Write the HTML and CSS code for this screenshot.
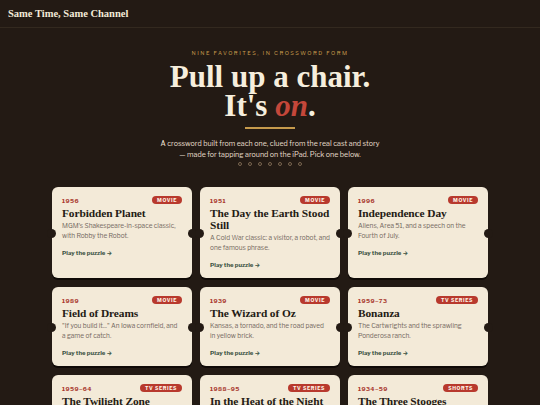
FILE: index.html
```html
<!DOCTYPE html>
<html>
    <head>
        <title>Same Time, Same Channel</title>
        <meta charset="UTF-8">
        <meta name="viewport" content="width=device-width, initial-scale=1.0">
        <link rel="stylesheet" href="styles.css">
    </head>
    <body>
        <header class="topbar">
            <span class="brand">Same Time, Same Channel</span>
        </header>

        <section class="hero">
            <div class="eyebrow">Nine favorites, in crossword form</div>
            <h1>Pull up a chair.<br>It's <em>on</em>.</h1>
            <div class="rule"></div>
            <p class="lead">A crossword built from each one, clued from the real cast and story<br>— made for tapping around on the iPad. Pick one below.</p>
            <div class="dots">
                <span></span><span></span><span></span><span></span><span></span><span></span><span></span>
            </div>
        </section>

        <main class="grid">
            <a class="ticket">
                <div class="meta"><span class="year">1956</span><span class="badge">Movie</span></div>
                <h2>Forbidden Planet</h2>
                <p>MGM's Shakespeare-in-space classic, with Robby the Robot.</p>
                <span class="play">Play the puzzle →</span>
            </a>
            <a class="ticket">
                <div class="meta"><span class="year">1951</span><span class="badge">Movie</span></div>
                <h2>The Day the Earth Stood Still</h2>
                <p>A Cold War classic: a visitor, a robot, and one famous phrase.</p>
                <span class="play">Play the puzzle →</span>
            </a>
            <a class="ticket">
                <div class="meta"><span class="year">1996</span><span class="badge">Movie</span></div>
                <h2>Independence Day</h2>
                <p>Aliens, Area 51, and a speech on the Fourth of July.</p>
                <span class="play">Play the puzzle →</span>
            </a>
            <a class="ticket">
                <div class="meta"><span class="year">1989</span><span class="badge">Movie</span></div>
                <h2>Field of Dreams</h2>
                <p>"If you build it..." An Iowa cornfield, and a game of catch.</p>
                <span class="play">Play the puzzle →</span>
            </a>
            <a class="ticket">
                <div class="meta"><span class="year">1939</span><span class="badge">Movie</span></div>
                <h2>The Wizard of Oz</h2>
                <p>Kansas, a tornado, and the road paved in yellow brick.</p>
                <span class="play">Play the puzzle →</span>
            </a>
            <a class="ticket">
                <div class="meta"><span class="year">1959–73</span><span class="badge">TV Series</span></div>
                <h2>Bonanza</h2>
                <p>The Cartwrights and the sprawling Ponderosa ranch.</p>
                <span class="play">Play the puzzle →</span>
            </a>
            <a class="ticket">
                <div class="meta"><span class="year">1959–64</span><span class="badge">TV Series</span></div>
                <h2>The Twilight Zone</h2>
                <p>Rod Serling's doorway into another dimension.</p>
                <span class="play">Play the puzzle →</span>
            </a>
            <a class="ticket">
                <div class="meta"><span class="year">1988–95</span><span class="badge">TV Series</span></div>
                <h2>In the Heat of the Night</h2>
                <p>Sparta, Mississippi, and Chief Gillespie.</p>
                <span class="play">Play the puzzle →</span>
            </a>
            <a class="ticket">
                <div class="meta"><span class="year">1934–59</span><span class="badge">Shorts</span></div>
                <h2>The Three Stooges</h2>
                <p>Moe, Larry, Curly and a lot of pie.</p>
                <span class="play">Play the puzzle →</span>
            </a>
        </main>
    </body>
</html>
```

FILE: styles.css
```css
* { box-sizing: border-box; }

body {
    margin: 0;
    background: #231a14;
    color: #f3ead8;
    font-family: "Libre Franklin", "Inter", "Liberation Sans", sans-serif;
}

.topbar {
    height: 28px;
    padding: 0 8px;
    display: flex;
    align-items: center;
    border-bottom: 1px solid #33291f;
}

.brand {
    font-family: "Liberation Serif", serif;
    font-weight: bold;
    font-size: 10.5px;
    color: #f3ead8;
}

.hero {
    text-align: center;
    padding-top: 22px;
}

.eyebrow {
    font-size: 5.5px;
    letter-spacing: 1.5px;
    text-transform: uppercase;
    color: #c69a4c;
}

.hero h1 {
    margin: 6px 0 0;
    font-family: "Liberation Serif", serif;
    font-weight: bold;
    font-size: 31px;
    line-height: 29px;
    color: #f6eedd;
}

.hero h1 em {
    color: #c4473a;
    font-style: italic;
}

.rule {
    width: 50px;
    height: 2px;
    margin: 7px auto 0;
    background: #c69a4c;
}

.lead {
    margin: 9px 0 0;
    font-size: 7.1px;
    line-height: 11px;
    color: #e8dfcd;
}

.dots {
    display: flex;
    justify-content: center;
    gap: 6px;
    margin-top: 2px;
}

.dots span {
    width: 4px;
    height: 4px;
    border: 1px solid #7a6650;
    border-radius: 50%;
}

.grid {
    width: 436px;
    margin: 21px auto 0;
    display: grid;
    grid-template-columns: repeat(3, 1fr);
    gap: 9px 8px;
}

.ticket {
    position: relative;
    display: flex;
    flex-direction: column;
    padding: 9px 8px 10px 10px;
    background: #f3ead8;
    border-radius: 6px;
    box-shadow: 0 2px 0 #0f0a07;
    color: #2a211a;
}

/* the punched notches on each side */
.ticket::before,
.ticket::after {
    content: "";
    position: absolute;
    top: 50%;
    width: 9px;
    height: 9px;
    margin-top: -4px;
    background: #231a14;
    border-radius: 50%;
}

.ticket::before { left: -5px; }
.ticket::after { right: -5px; }

.meta {
    display: flex;
    justify-content: space-between;
    align-items: center;
    padding-right: 2px;
}

.year {
    font-size: 6px;
    font-weight: bold;
    letter-spacing: 0.4px;
    color: #a9392f;
}

.badge {
    padding: 1px 5px;
    border-radius: 6px;
    background: #b8392d;
    color: #fff3e6;
    font-size: 5px;
    font-weight: bold;
    letter-spacing: 0.6px;
    text-transform: uppercase;
}

.ticket h2 {
    margin: 3px 0 0;
    font-family: "Liberation Serif", serif;
    font-weight: bold;
    font-size: 11.4px;
    line-height: 12px;
    letter-spacing: -0.1px;
    color: #241b14;
}

.ticket p {
    margin: 2px 2px 0 0;
    font-size: 6.5px;
    line-height: 10px;
    color: #74695f;
}

.play {
    margin-top: 8px;
    font-size: 6px;
    font-weight: bold;
    color: #3a5242;
}
```
